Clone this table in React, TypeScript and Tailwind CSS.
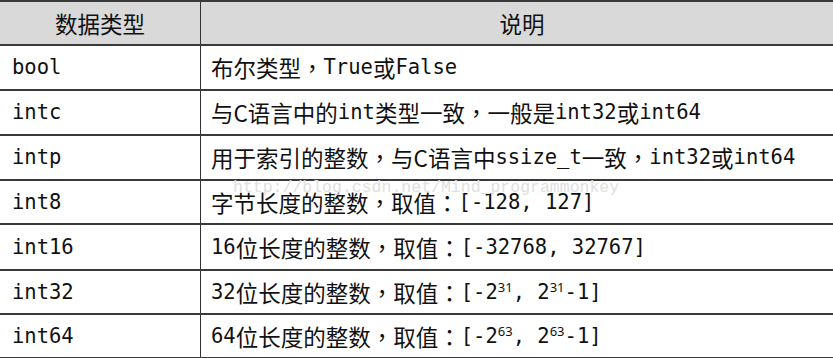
import type { ReactNode } from 'react';

const cjk = "font-['Noto_Sans_CJK_SC',sans-serif] text-[22.5px] leading-none";

function M({ children }: { children: ReactNode }) {
  return <span className="font-['DejaVu_Sans_Mono',monospace] text-[20.5px]">{children}</span>;
}

// full-width punctuation, centred in its box
function P({ children }: { children: ReactNode }) {
  return <span className="font-['Noto_Sans_CJK_TC',sans-serif]">{children}</span>;
}

function Sup({ children }: { children: ReactNode }) {
  return <sup className="font-['Noto_Sans',sans-serif] text-[13px] -top-[7px] relative align-baseline">{children}</sup>;
}

type Row = { type: string; desc: ReactNode; h: string };

const rows: Row[] = [
  { type: 'bool', desc: <>布尔类型<P>，</P><M>True</M>或<M>False</M></>, h: 'h-[45px]' },
  { type: 'intc', desc: <>与C语言中的<M>int</M>类型一致<P>，</P>一般是<M>int32</M>或<M>int64</M></>, h: 'h-[45px]' },
  { type: 'intp', desc: <>用于索引的整数<P>，</P>与C语言中<M>ssize_t</M>一致<P>，</P><M>int32</M>或<M>int64</M></>, h: 'h-[45px]' },
  { type: 'int8', desc: <>字节长度的整数<P>，</P>取值<P>：</P><M>[-128, 127]</M></>, h: 'h-[44px]' },
  { type: 'int16', desc: <><M>16</M>位长度的整数<P>，</P>取值<P>：</P><M>[-32768, 32767]</M></>, h: 'h-[46px]' },
  { type: 'int32', desc: <><M>32</M>位长度的整数<P>，</P>取值<P>：</P><M>[-2<Sup>31</Sup>, 2<Sup>31</Sup>-1]</M></>, h: 'h-[44px]' },
  { type: 'int64', desc: <><M>64</M>位长度的整数<P>，</P>取值<P>：</P><M>[-2<Sup>63</Sup>, 2<Sup>63</Sup>-1]</M></>, h: 'h-[44px]' },
];

export default function App() {
  return (
    <div className="w-[833px] h-[358px] overflow-hidden bg-white relative text-[#111]">
      <div className="w-[843px] border-t-2 border-[#3a3a3a]">
        <div className="grid grid-cols-[201px_1fr] h-[44px] bg-[#d9d9d9] border-b-2 border-[#3a3a3a]">
          <div className={`${cjk} flex items-center justify-center border-r border-[#333]`}>数据类型</div>
          <div className={`${cjk} flex items-center justify-center`}>说明</div>
        </div>
        {rows.map((r) => (
          <div key={r.type} className={`grid grid-cols-[201px_1fr] ${r.h} border-b-2 border-[#3a3a3a]`}>
            <div className="flex items-center pl-3 border-r border-[#333]">
              <M>{r.type}</M>
            </div>
            <div className={`${cjk} flex items-center pl-[10px] whitespace-nowrap`}>{r.desc}</div>
          </div>
        ))}
      </div>
      <div className="absolute left-[233px] top-[180px] font-['Liberation_Mono',monospace] text-[16.5px] leading-none text-[#e0e0e0] pointer-events-none">
        http://blog.csdn.net/Mind_programmonkey
      </div>
    </div>
  );
}
